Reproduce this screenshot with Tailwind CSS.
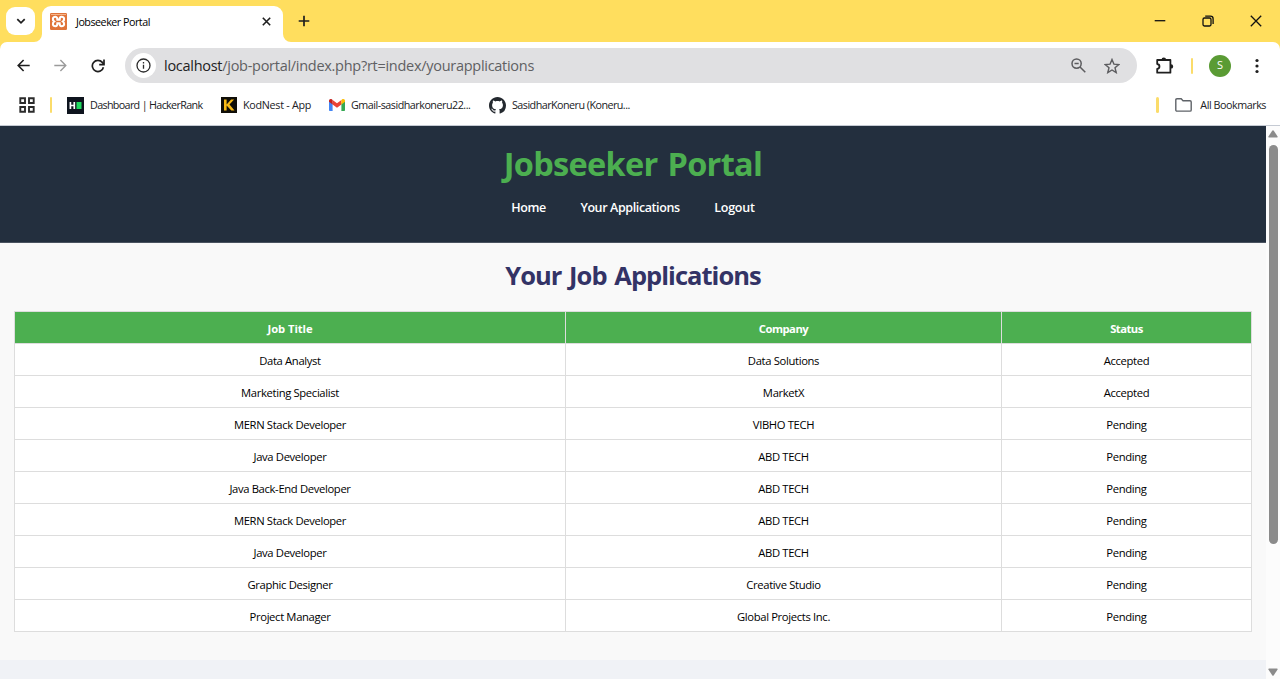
<!DOCTYPE html>
<html lang="en">
<head>
<meta charset="utf-8">
<title>Jobseeker Portal</title>
<script src="https://cdn.jsdelivr.net/npm/@tailwindcss/browser@4"></script>
</head>
<body class="flex h-[679px] w-[1280px] flex-col overflow-hidden bg-white font-['Open_Sans','Noto_Sans',sans-serif] text-black">

<!-- Tab strip -->
<div class="flex h-[42px] shrink-0 bg-[#ffde5e]">
  <div class="ml-[6px] mt-[7px] flex h-7 w-[29px] items-center justify-center rounded-[9px] bg-white">
    <svg class="size-[10px]" viewBox="0 0 10 10" fill="none" stroke="#1f1f1f" stroke-width="1.7"><path d="M1.3 3.2 5 6.9 8.7 3.2"/></svg>
  </div>
  <svg class="ml-[-1px] mt-[34px] h-2 w-2" viewBox="0 0 8 8"><path d="M8 0v8H0A8 8 0 0 0 8 0Z" fill="#fff"/></svg>
  <div class="mt-[6px] flex h-9 w-[241px] items-center rounded-t-[9px] bg-white pl-2 pb-[5px]">
    <svg class="size-[17px] shrink-0" viewBox="0 0 17 17"><rect width="17" height="17" rx="1.2" fill="#e0743a"/><rect x="1" y="1" width="15" height="1" fill="#f5b58a"/><path d="M5.4 3.8c-3 0-3.2 3.2-1.2 4.7-2 1.5-1.8 4.7 1.2 4.7 1.8 0 2-1.8 2-2.9h2.2c0 1.1.2 2.9 2 2.9 3 0 3.2-3.2 1.2-4.7 2-1.5 1.8-4.7-1.2-4.7-1.8 0-2 1.8-2 2.9H7.4c0-1.1-.2-2.9-2-2.9Z" fill="none" stroke="#fff" stroke-width="2.1"/></svg>
    <span class="ml-[9px] mt-px whitespace-nowrap text-[10.75px] tracking-[-0.5px]">Jobseeker Portal</span>
    <svg class="ml-auto mr-[11px] size-[11px]" viewBox="0 0 11 11" stroke="#1f1f1f" stroke-width="1.6"><path d="m1.8 1.8 7.4 7.4m0-7.4-7.4 7.4"/></svg>
  </div>
  <svg class="mt-[34px] h-2 w-2" viewBox="0 0 8 8"><path d="M0 0v8h8A8 8 0 0 1 0 0Z" fill="#fff"/></svg>
  <svg class="ml-[7px] mt-[15px] size-3" viewBox="0 0 12 12" stroke="#1f1f1f" stroke-width="1.7"><path d="M6 .7v10.6M.7 6h10.6"/></svg>
  <div class="ml-auto mr-[18px] mt-[15px] flex h-3 items-center">
    <svg class="h-3 w-3" viewBox="0 0 12 12" stroke="#111" stroke-width="1.3"><path d="M.7 5.7h10.6"/></svg>
    <svg class="ml-9 h-3 w-3" viewBox="0 0 12 12" fill="none" stroke="#111" stroke-width="1.3"><rect x="1" y="3" width="8" height="8" rx="1.4"/><path d="M3.2 1.2h5.3a2.6 2.6 0 0 1 2.6 2.6V9"/></svg>
    <svg class="ml-9 h-3 w-3" viewBox="0 0 12 12" stroke="#111" stroke-width="1.3"><path d="m.8.8 10.4 10.4m0-10.4L.8 11.2"/></svg>
  </div>
</div>

<!-- Address bar -->
<div class="h-12 shrink-0 bg-[#ffde5e]">
<div class="flex h-12 items-center rounded-t-[7px] bg-white pb-px">
  <svg class="ml-[17px] size-[13px]" viewBox="0 0 13 13" fill="none" stroke="#1f1f1f" stroke-width="1.6"><path d="M12.7 6.5H1.3M6.6 1 1.2 6.5l5.4 5.5"/></svg>
  <svg class="ml-6 size-[13px]" viewBox="0 0 13 13" fill="none" stroke="#9b9b9b" stroke-width="1.4"><path d="M.3 6.5h11.4M6.4 1l5.4 5.5L6.4 12"/></svg>
  <svg class="ml-6 size-[14px]" viewBox="0 0 14 14" fill="none" stroke="#1f1f1f" stroke-width="1.7"><path d="M12.4 8.2A5.6 5.6 0 1 1 11.3 3.4L12.7 5.2"/><path d="M13 .6v5H8.2"/></svg>
  <div class="ml-5 flex h-[35px] w-[1012px] items-center rounded-full bg-[#e0e0e2] pl-[6px]">
    <div class="flex size-[25px] items-center justify-center rounded-full bg-white">
      <svg class="size-[15px]" viewBox="0 0 15 15" fill="none" stroke="#2b2b2b" stroke-width="1.3"><circle cx="7.5" cy="7.5" r="6.5"/><path d="M7.5 6.7v4M7.5 4v1.4"/></svg>
    </div>
    <div class="ml-[8px] whitespace-nowrap text-[14.5px] leading-5 tracking-[-0.28px] text-[#5f6063]"><span class="text-[#222]">localhost</span>/job-portal/index.php?rt=index/yourapplications</div>
    <svg class="ml-auto size-[15px]" viewBox="0 0 15 15" fill="none" stroke="#5c5c5f" stroke-width="1.5"><circle cx="5.6" cy="5.6" r="4.6"/><path d="m9 9 5.3 5.3M3.5 5.6h4.2"/></svg>
    <svg class="ml-[18px] mr-[17px] size-[16px]" viewBox="0 0 16 16" fill="none" stroke="#5c5c5f" stroke-width="1.4"><path d="m8 1.5 1.9 4.6 4.9.4-3.8 3.2 1.2 4.9L8 12l-4.2 2.6L5 9.7 1.2 6.5l4.9-.4Z"/></svg>
  </div>
  <svg class="ml-[18px] h-[18px] w-[19px]" viewBox="0 0 19 18" fill="none"><path d="M2.2 3H15.400v12.700H2.200v-3.700c3-.5 3-4.500 0-5Z" stroke="#1f1f1f" stroke-width="1.8" stroke-linejoin="round"/><path d="M6.500 2.700a2.300 2.300 0 0 1 4.600 0ZM16 7.200a2.200 2.200 0 0 1 0 4.400Z" fill="#1f1f1f"/></svg>
  <div class="ml-[17px] h-4 w-[2px] rounded bg-[#fbdc6a]"></div>
  <div class="ml-4 flex size-[22px] items-center justify-center rounded-full bg-[#5a9b34] text-[11px] text-white">S</div>
  <svg class="ml-[24px] h-4 w-1" viewBox="0 0 4 16" fill="#1f1f1f"><circle cx="2" cy="2.5" r="1.6"/><circle cx="2" cy="8" r="1.6"/><circle cx="2" cy="13.5" r="1.6"/></svg>
</div>
</div>

<!-- Bookmarks -->
<div class="flex h-9 shrink-0 items-center whitespace-nowrap border-b border-[#c5cad3] pb-[5px] text-[10.75px] text-[#202124]">
  <svg class="ml-[19px] size-4" viewBox="0 0 16 16" fill="none" stroke="#2b2b2b" stroke-width="1.9"><path d="M1.3 1.3h4.7V6H1.3ZM10 1.3h4.7V6H10ZM1.3 10H6v4.7H1.3ZM10 10h4.7v4.7H10Z"/></svg>
  <div class="ml-[15px] h-4 w-[2px] rounded bg-[#fbdc6a]"></div>
  <svg class="ml-[15px] size-[17px]" viewBox="0 0 17 17"><path fill="#0e141e" d="M0 0h17v17H0z"/><path d="M3.4 5v7M7.3 5v7M3.4 8.5h4" stroke="#fff" stroke-width="1.7"/><path fill="#1fdb5f" d="M9.5 5h5v7h-5z"/></svg>
  <span class="ml-[6px] w-[114px] tracking-[-0.66px]">Dashboard | HackerRank</span>
  <svg class="ml-[17px] size-4" viewBox="0 0 16 16"><path fill="#100e08" d="M0 0h16v16H0z"/><path fill="#f7b916" d="M3 2.500h2.600v4.900l4.500-4.900h3L8.500 7.600l5 6h-3.200L5.600 8.500v5.100H3Z"/></svg>
  <span class="ml-[6px] w-[69px] tracking-[-0.28px]">KodNest - App</span>
  <svg class="ml-[17px] h-3 w-4" viewBox="0 0 16 12"><path fill="#4285f4" d="M0 2v8.900c0 .6.500 1.100 1.100 1.100h2.500V4.300Z"/><path fill="#34a853" d="M12.400 4.300V12h2.500c.6 0 1.100-.5 1.100-1.100V2Z"/><path fill="#ea4335" d="M3.600 5.500V.9L8 4.200 12.400.9v4.600L8 8.800Z"/><path fill="#c5221f" d="M0 1.600v1.200l3.600 2.700V.9L3 .4C1.700-.5 0 .2 0 1.600Z"/><path fill="#fbbc04" d="M12.400.9v4.600L16 2.800V1.600c0-1.400-1.700-2.100-3-1.200Z"/></svg>
  <span class="ml-[6px] w-[121px] tracking-[-0.49px]">Gmail-sasidharkoneru22...</span>
  <svg class="ml-[17px] size-[17px]" viewBox="0 0 16 16" fill="#24292f"><path d="M8 0C3.580 0 0 3.580 0 8c0 3.540 2.290 6.530 5.470 7.590.4.070.55-.17.55-.38 0-.19-.01-.82-.01-1.490-2.010.37-2.530-.49-2.690-.94-.09-.23-.48-.94-.82-1.130-.28-.15-.68-.52-.01-.53.63-.01 1.080.58 1.230.82.72 1.210 1.870.87 2.330.66.070-.52.280-.87.510-1.070-1.780-.2-3.640-.89-3.640-3.950 0-.87.310-1.590.82-2.150-.08-.2-.36-1.020.08-2.120 0 0 .67-.21 2.200.82.640-.18 1.320-.27 2-.27s1.360.09 2 .27c1.530-1.040 2.200-.82 2.200-.82.440 1.100.160 1.920.080 2.120.510.560.820 1.270.820 2.150 0 3.070-1.870 3.750-3.650 3.950.290.250.540.730.540 1.480 0 1.070-.010 1.930-.010 2.200 0 .210.150.460.550.380A8.010 8.010 0 0 0 16 8c0-4.420-3.580-8-8-8Z"/></svg>
  <span class="ml-[6px] tracking-[-0.53px]">SasidharKoneru (Koneru...</span>
  <div class="ml-auto h-4 w-[3px] rounded bg-[#fbdc6a]"></div>
  <svg class="ml-4 h-[14px] w-[17px]" viewBox="0 0 17 14" fill="none" stroke="#5f6368" stroke-width="1.4"><path d="M.8 2q0-1.200 1.200-1.200h4.200L8 2.700h7q1.200 0 1.200 1.200v8q0 1.200-1.200 1.200H2Q.8 13.100.8 11.900Z"/></svg>
  <span class="ml-2 mr-[14px] tracking-[-0.46px]">All Bookmarks</span>
</div>

<!-- Page and scrollbar -->
<div class="flex min-h-0 flex-1">
  <div class="w-[1266px] bg-[#f0f2f6]">
    <header class="h-[117px] border-b border-[#4a5360] bg-[#232f3e] pt-[16px] text-center">
      <h1 class="text-[32.5px] font-bold leading-[44px] tracking-[-0.68px] [word-spacing:2px] text-[#4caf50]">Jobseeker Portal</h1>
      <nav class="mt-[13px] flex justify-center gap-[34.5px] text-[12.5px] font-semibold leading-[18px] text-white">
        <span class="tracking-[-0.4px]">Home</span><span class="tracking-[-0.39px]">Your Applications</span><span class="tracking-[-0.23px]">Logout</span>
      </nav>
    </header>
    <main class="h-[417px] bg-[#f9f9f9] pl-[14px] pt-[13px]">
      <h2 class="w-[1238px] text-center text-[25.5px] font-bold leading-[38px] tracking-[-0.96px] [word-spacing:2px] text-[#333366]">Your Job Applications</h2>
      <div class="mt-[17px] w-[1238px] border-l border-t border-[#dddddd] bg-white text-center text-[11.25px] leading-[29px] tracking-[-0.35px] *:grid *:h-8 *:grid-cols-[551px_436px_250px] *:*:border-b *:*:border-r *:*:border-[#dddddd] *:*:pt-[2px]">
        <div class="bg-[#4caf50] font-bold text-white"><div class="tracking-[-0.08px]">Job Title</div><div class="tracking-[-0.48px]">Company</div><div class="tracking-[-0.53px]">Status</div></div>
        <div><div>Data Analyst</div><div>Data Solutions</div><div>Accepted</div></div>
        <div><div>Marketing Specialist</div><div>MarketX</div><div>Accepted</div></div>
        <div><div>MERN Stack Developer</div><div>VIBHO TECH</div><div>Pending</div></div>
        <div><div>Java Developer</div><div>ABD TECH</div><div>Pending</div></div>
        <div><div>Java Back-End Developer</div><div>ABD TECH</div><div>Pending</div></div>
        <div><div>MERN Stack Developer</div><div>ABD TECH</div><div>Pending</div></div>
        <div><div>Java Developer</div><div>ABD TECH</div><div>Pending</div></div>
        <div><div>Graphic Designer</div><div>Creative Studio</div><div>Pending</div></div>
        <div><div>Project Manager</div><div>Global Projects Inc.</div><div>Pending</div></div>
      </div>
    </main>
  </div>
  <div class="flex w-[14px] flex-col items-center bg-[#fcfcfc]">
    <svg class="mt-1 h-2 w-[10px]" viewBox="0 0 10 8" fill="#8b8b8b"><path d="M4.2.7q.8-1 1.6 0L9.6 6.500q.5 1-.6 1H1q-1.100 0-.6-1Z"/></svg>
    <div class="mt-[7px] h-[399px] w-[9px] rounded-full bg-[#8b8b8b]"></div>
    <svg class="mb-[3px] mt-auto h-2 w-[10px]" viewBox="0 0 10 8" fill="#8b8b8b"><path d="M4.200 7.300q.8 1 1.600 0L9.600 1.500q.5-1-.6-1H1q-1.100 0-.6 1Z"/></svg>
  </div>
</div>
</body>
</html>
